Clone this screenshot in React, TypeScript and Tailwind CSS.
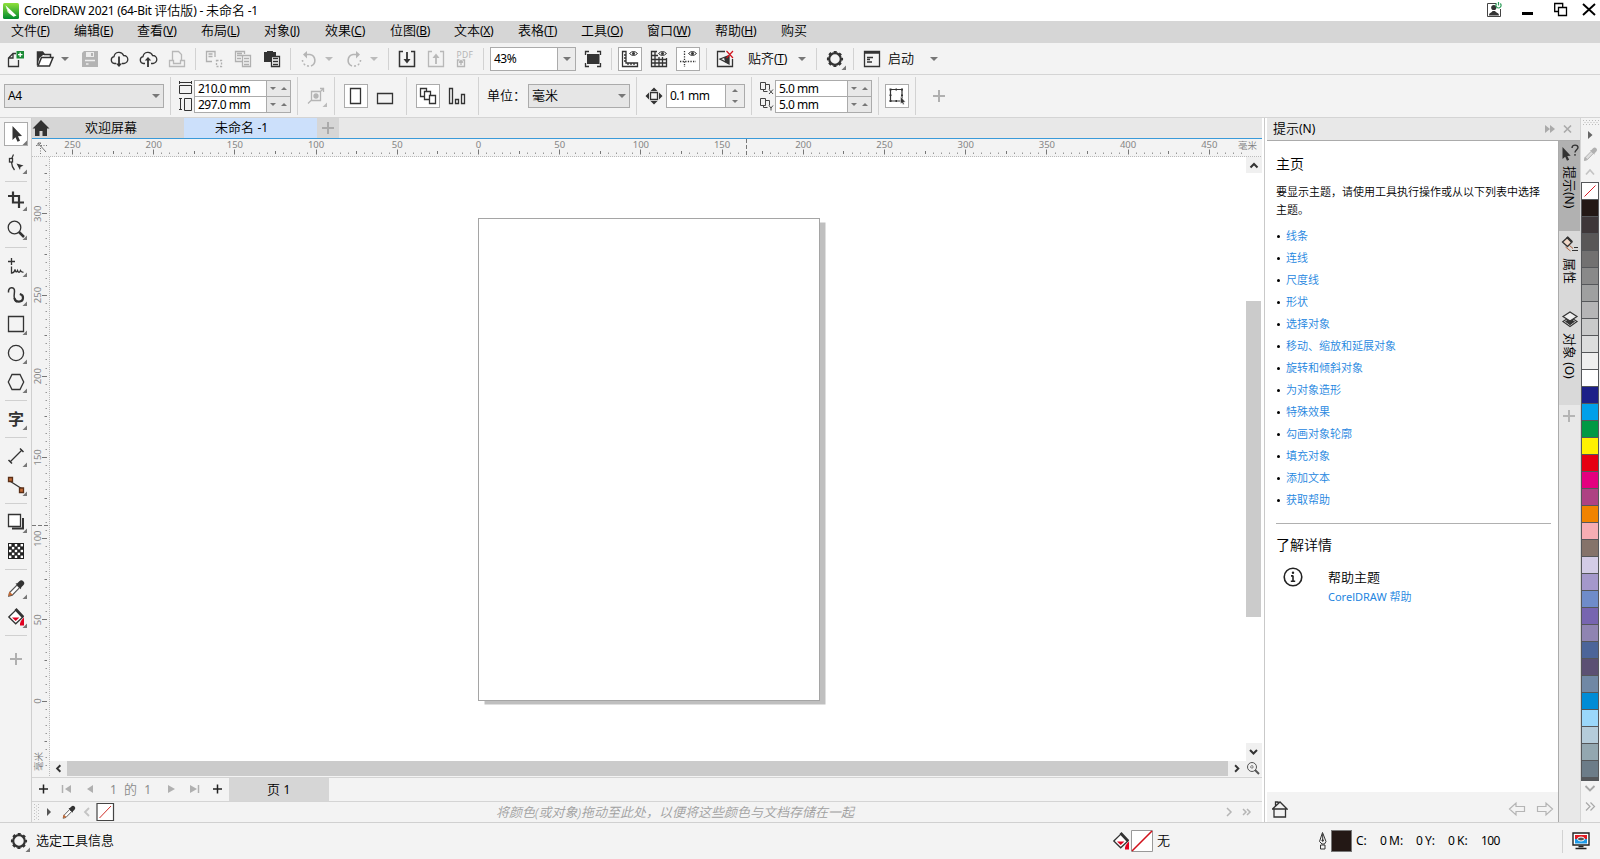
import React from "react";

type Kids = { children?: React.ReactNode };

const Ic = ({ children, corner, box, c = "" }: Kids & { corner?: boolean; box?: boolean; c?: string }) => (
  <svg
    className={"h-6 w-6 shrink-0 " + (box ? "bg-white outline outline-1 -outline-offset-1 outline-[#ababab] " : "") + c}
    viewBox="0 0 24 24"
    fill="none"
    stroke="#333"
    strokeWidth="1.3"
  >
    {children}
    {corner && <path d="M23 18.5V23H18.5Z" fill="#777" stroke="none" />}
  </svg>
);

const Caret = ({ c = "", up = false, small = false, color = "#777" }: { c?: string; up?: boolean; small?: boolean; color?: string }) => (
  <svg className={"shrink-0 " + (small ? "h-[3px] w-[6px] " : "h-1 w-2 ") + c} viewBox="0 0 8 4" preserveAspectRatio="none">
    <path d={up ? "M0 4H8L4 0Z" : "M0 0H8L4 4Z"} fill={color} />
  </svg>
);

const Sep = ({ c = "" }: { c?: string }) => <div className={"w-px shrink-0 bg-[#d2d2d2] " + c} />;
const HSep = () => <div className="my-[6px] h-px w-[22px] shrink-0 bg-[#d0d0d0]" />;

const Gear = ({ corner = false }) => (
  <Ic corner={corner}>
    <circle cx="12" cy="12" r="5.8" strokeWidth="2.2" />
    <circle cx="12" cy="12" r="7.1" strokeWidth="2" strokeDasharray="2.9 2.676" strokeDashoffset="1.45" />
  </Ic>
);

const Dropper = ({ grey = false }) => (
  <g stroke="none">
    <path d="M13 9l2.6 2.6-7.4 7.6-3.4 1 .8-3.6z" fill={grey ? "#ddd" : "#fff"} stroke={grey ? "#b0b0b0" : "#555"} strokeWidth="1.2" />
    <path d="M4.200 20.200l1.200-4.700 3.400 3.200z" fill={grey ? "#b0b0b0" : "#c46a35"} />
    <path d="M11.500 7.500l1.800-.300 2-2a2.800 2.800 0 0 1 4 4l-2 2-.400 2z" fill={grey ? "#b0b0b0" : "#333"} />
  </g>
);

const Bucket = () => (
  <g>
    <path d="M4.800 12l7.600-7.400 6.800 7.200-7.500 7z" fill="#fff" strokeWidth="1.3" />
    <path d="M11.500 4l7.500 8" strokeWidth="2.800" />
    <path d="M8 12.500h7.400l-3.700 3.600z" fill="#e00020" stroke="none" />
    <path d="M20 12.500v8h-4c-.500-2.500 1-5.500 4-8z" fill="#e00020" stroke="none" />
  </g>
);

const menus: [string, string, string][] = [
  ["文件", "F", "w-[63px]"], ["编辑", "E", "w-[63px]"], ["查看", "V", "w-[64px]"], ["布局", "L", "w-[63px]"],
  ["对象", "J", "w-[61px]"], ["效果", "C", "w-[65px]"], ["位图", "B", "w-[64px]"], ["文本", "X", "w-[64px]"],
  ["表格", "T", "w-[63px]"], ["工具", "O", "w-[66px]"], ["窗口", "W", "w-[68px]"], ["帮助", "H", "w-[66px]"], ["购买", "", "w-[60px]"],
];

const TitleBar = () => (
  <div className="flex h-[21px] items-center bg-white">
    <svg className="ml-[3px] h-4 w-4" viewBox="0 0 16 16">
      <defs>
        <linearGradient id="g" x1="0" y1="0" x2="0" y2="1"><stop offset="0" stopColor="#8fe03a" /><stop offset="1" stopColor="#008a2e" /></linearGradient>
      </defs>
      <rect width="16" height="16" rx="1.5" fill="url(#g)" />
      <path d="M2.500 2.200L13.500 12.500 10.500 13.800 5 9.500z" fill="#fff" />
      <path d="M2.500 2.200L5 9.500 6.500 10.600z" fill="#b8e8a0" />
    </svg>
    <div className="ml-[5px] w-[400px] whitespace-pre text-[12px] font-normal tracking-[-0.300px]">CorelDRAW 2021 (64-Bit <span className="text-[13px] font-[350] tracking-normal">评估版</span>) - <span className="text-[13px] font-[350] tracking-normal">未命名</span> -1</div>
    <svg className="ml-auto h-[21px] w-[130px]" viewBox="0 0 130 21" fill="none" stroke="#000">
      <path d="M26 3.500H17.500V16.500H30.500V9" stroke="#444" />
      <circle cx="23.800" cy="7.500" r="2.600" fill="#333" stroke="none" />
      <path d="M19 15.500c0-3 2.500-2.500 3.500-4.500h2.600c1 2 3.900 1.500 3.900 4.500z" fill="#333" stroke="none" />
      <path d="M26.700 3.500a2.600 2.600 0 1 0 3.600 0M28.500 2v3.500" stroke="#2f9e5b" strokeWidth="1.200" />
      <path d="M52 13.500h11" strokeWidth="3" />
      <path d="M88.500 11.500h-3.800v-8h8v3.500M88.500 7.500h8v8h-8z" strokeWidth="1.300" />
      <path d="M113 4l12 11M125 4l-12 11" strokeWidth="1.900" />
    </svg>
  </div>
);

const MenuBar = () => (
  <div className="flex h-[22px] items-start bg-[#d6d6d6] pl-[11px] text-[13px] leading-[19px]">
    {menus.map(([t, k, w]) => (
      <div key={t} className={"whitespace-nowrap " + w}>
        {t}
        {k && <span className="text-[12px] font-normal tracking-[-0.3px]">(<u className="underline-offset-1">{k}</u>)</span>}
      </div>
    ))}
  </div>
);

const StandardBar = () => (
  <div className="flex h-8 items-start border-b border-[#d4d4d4] bg-[#f3f3f3] pl-1 pt-1">
    <Ic><path d="M12 6.500H9L4.500 11V19.500H14.500V13M9 6.500V11H4.500" /><rect x="12.500" y="4" width="7.500" height="7.500" fill="#1a8a35" stroke="none" /><path d="M16.200 5.500v4.500M14 7.700h4.500" stroke="#fff" /></Ic>
    <Ic c="ml-[5px]"><path d="M4.500 18.500V5h5l2 2.500h6v3" strokeWidth="1.500" /><path d="M4 18.500V5h5.500l2 3H10L6.500 11z" fill="#333" stroke="none" /><path d="M5 19L8.500 10.500H20L16.500 19z" fill="#fff" strokeWidth="1.500" /></Ic>
    <div className="flex h-6 w-4 items-center justify-center"><Caret /></div>
    <Ic c="ml-[5px]"><path d="M4 6l2-2h14v16H4z" fill="#b3b3b3" stroke="none" /><path d="M8 5h8v5H8z" fill="#ececec" stroke="none" /><path d="M13 6h2v3h-2zM7 13h10v5H7z" fill="#b3b3b3" stroke="none" /><path d="M7 13.500h10M8 17h2.500" stroke="#eee" /></Ic>
    <Ic c="ml-[5px]"><path d="M9 16.500H7.500A3.500 3.500 0 0 1 7 9.600 5 5 0 0 1 16.600 8.500 4 4 0 0 1 17 16.500H15" /><path d="M12 9.500v8" strokeWidth="1.800" /><path d="M8.800 16.500h6.400L12 20z" fill="#333" stroke="none" /></Ic>
    <Ic c="ml-[5px]"><path d="M9 16.500H7.500A3.500 3.500 0 0 1 7 9.600 5 5 0 0 1 16.600 8.500 4 4 0 0 1 17 16.500H15" /><path d="M12 12v8" strokeWidth="1.800" /><path d="M8.800 13.500h6.400L12 10z" fill="#333" stroke="none" /></Ic>
    <Ic c="ml-[5px]"><g stroke="#b8b8b8"><path d="M7.500 13.500v-9h6l3 3v6M4.500 13.500h4v3h7v-3h4v6h-15z" /></g></Ic>
    <Sep c="mx-[6px] mt-[1px] h-[22px]" />
    <Ic><g stroke="#b0b0b0"><path d="M13 10V4.500H4.500v10H10M6.500 7h4M6.500 9.500h4" /><path d="M14.500 13.500h5v6h-5z" strokeDasharray="2 1.500" /></g></Ic>
    <Ic c="ml-[5px]"><g stroke="#b0b0b0"><path d="M11 14.500H4.500v-10h9V7M6 6.500h5M6 8.500h5M6 11.500h4M11.500 8.500h8v11h-8zM13 11.500h5M13 14.500h5M13 17.500h5" /></g></Ic>
    <Ic c="ml-[5px]"><path d="M4 5h3V4h6v1h3v4h-5v6H4z" fill="#333" stroke="none" /><path d="M11.500 9.500h8v10h-8z" fill="#fff" /><path d="M13 11.500h5M13 14.500h5M13 17.500h5" /></Ic>
    <Sep c="mx-[6px] mt-[1px] h-[22px]" />
    <Ic><g stroke="#b5b5b5" strokeWidth="1.600"><path d="M8 7.500h5a6 6 0 0 1 1 11.500" /><path d="M12 19a6 6 0 0 1-6.500-6" strokeDasharray="2 2" /><path d="M10 4L6 7.500l4 4z" fill="#b5b5b5" stroke="none" /></g></Ic>
    <div className="flex h-6 w-4 items-center justify-center"><Caret color="#bbb" /></div>
    <Ic c="ml-[5px]"><g stroke="#b5b5b5" strokeWidth="1.600"><path d="M16 7.500h-5a6 6 0 0 0-1 11.500" /><path d="M12 19a6 6 0 0 0 6.500-6" strokeDasharray="2 2" /><path d="M14 4l4 3.500-4 4z" fill="#b5b5b5" stroke="none" /></g></Ic>
    <div className="flex h-6 w-4 items-center justify-center"><Caret color="#bbb" /></div>
    <Sep c="mx-[6px] mt-[1px] h-[22px]" />
    <Ic><path d="M8 4.500H4.500v15h15v-15H16" strokeWidth="1.500" /><path d="M12 5v9" strokeWidth="1.800" /><path d="M8.500 12h7L12 16.500z" fill="#333" stroke="none" /></Ic>
    <Ic c="ml-[5px]"><g stroke="#b8b8b8"><path d="M8 4.500H4.500v15h15v-15H16" /><path d="M12 8v9" strokeWidth="1.800" /><path d="M8.500 11h7L12 6.500z" fill="#b8b8b8" stroke="none" /></g></Ic>
    <Ic c="ml-[5px]"><text x="3.500" y="11" fontSize="8.500" fontWeight="400" textLength="16.500" fill="#b5b5b5" stroke="none">PDF</text><path d="M6.500 13H4.500v6.500h7V13H9.500M8 18v-3.500M6 15.500l2-2 2 2" stroke="#b5b5b5" /></Ic>
    <Sep c="mx-[6px] mt-[1px] h-[22px]" />
    <div className="flex h-6 w-[86px] border border-[#ababab] bg-white text-[12px] font-normal">
      <div className="flex-1 pl-[3px] leading-[22px] tracking-[-0.5px]">43%</div>
      <div className="flex w-[18px] items-center justify-center border-l border-[#ababab] bg-[#ececec]"><Caret /></div>
    </div>
    <Ic c="ml-[5px]"><path d="M8 4.500H4.500V8M16 4.500h3.500V8M8 19.500H4.500V16M16 19.500h3.500V16" /><path d="M6 7h12.500v10H6z" fill="#333" stroke="none" /></Ic>
    <Sep c="mx-[6px] mt-[1px] h-[22px]" />
    <Ic box><path d="M4.500 4.500h3.500v11.500h11.500v3.500h-15zM6 8h1.500M6 11h1.500M6 14h1.500M10 18v-1.500M13 18v-1.500M16 18v-1.500" /><path d="M11.500 6.500q4-4 8 0q-4 4-8 0z" strokeWidth="1" /><circle cx="15.500" cy="6.500" r="1.500" fill="#333" stroke="none" /></Ic>
    <Ic c="ml-[5px]"><path d="M10 4.500H4.500v15h15V11M4.500 8.500H11M4.500 12.500h15M4.500 16h15M8 4.500v15M12 10v9.500M15.500 10v9.500" /><path d="M11.500 6.500q4-4 8 0q-4 4-8 0z" strokeWidth="1" /><circle cx="15.500" cy="6.500" r="1.500" fill="#333" stroke="none" /></Ic>
    <Ic box c="ml-[5px]"><path d="M8.500 4v16M4 14.500h16" strokeDasharray="1.300 1.300" /><path d="M12.500 6.500q4-4 8 0q-4 4-8 0z" strokeWidth="1" /><circle cx="16.500" cy="6.500" r="1.500" fill="#333" stroke="none" /></Ic>
    <Sep c="mx-[6px] mt-[1px] h-[22px]" />
    <Ic><path d="M12 4.500H4.500v15h15V12" /><path d="M16 8.500L7 12l9 5V8.500" strokeWidth="1.300" /><path d="M11 10.500l5-2V17l-4-2z" fill="#333" stroke="none" /><path d="M13.500 4l6.500 7M20 4l-6.500 7" stroke="#d0121c" strokeWidth="1.200" /></Ic>
    <div className="ml-[11px] w-[50px] whitespace-nowrap text-[13px] leading-[23px]">贴齐<span className="text-[12px] font-normal tracking-[-0.3px]">(<u>T</u>)</span></div>
    <div className="flex h-6 w-2 items-center"><Caret /></div>
    <Sep c="ml-[10px] mr-[6px] mt-[1px] h-[22px]" />
    <Gear corner />
    <Sep c="ml-[6px] mr-[6px] mt-[1px] h-[22px]" />
    <Ic><path d="M4.500 4.500h15v15h-15z" /><path d="M4 5.500h16" strokeWidth="2.500" /><path d="M7 10.500h6M7 12.500h3M7 15h5" /></Ic>
    <div className="ml-[4px] w-[42px] text-[13px] leading-[23px]">启动</div>
    <div className="flex h-6 items-center"><Caret /></div>
  </div>
);

const Spin = ({ a, b }: { a: string; b: string }) => (
  <div className="mt-[5px] flex h-[33px] w-[97px] shrink-0 flex-col border border-[#ababab] bg-white text-[12px] font-normal tracking-[-0.500px]">
    {[a, b].map((v, i) => (
      <div key={i} className={"flex " + (i ? "h-4 border-t border-[#ababab]" : "h-[15px]")}>
        <div className="flex-1 pl-[3px] leading-[15px]">{v}</div>
        <div className="flex w-6 items-center justify-around border-l border-[#ababab] bg-[#e8e8e8]">
          <Caret small /><Caret small up />
        </div>
      </div>
    ))}
  </div>
);

const PropertyBar = () => (
  <div className="flex h-[43px] items-start border-b border-[#d4d4d4] bg-[#f3f3f3] pl-1">
    <div className="mt-[9px] flex h-6 w-40 items-center justify-between border border-[#ababab] bg-[#e6e6e6] pl-[3px] pr-[3px] text-[12px] font-normal tracking-[-0.300px]">A4<Caret /></div>
    <Sep c="ml-[6px] mt-[2px] h-[38px]" />
    <svg className="ml-[8px] mt-[5px] h-[33px] w-[14px]" viewBox="0 0 14 33" fill="none" stroke="#333">
      <path d="M1 2.500h12M.500 1v3M12.500 1v3M.500 5.500h12v8H.500zM1.500 18v12M0 18.500h3M0 29.500h3M5.500 18.500h7v12h-7z" />
    </svg>
    <div className="ml-[1px]"><Spin a="210.0 mm" b="297.0 mm" /></div>
    <Sep c="ml-[6px] mt-[2px] h-[38px]" />
    <Ic c="ml-[6px] mt-[9px]"><g stroke="#b5b5b5"><path d="M7.500 7.500h9v9h-9zM4 19.500l3-3M16.500 7.500L20 4M16 4.500h3.500V8" /><circle cx="12" cy="12" r="2" fill="#b5b5b5" /><path d="M23 18.500V23H18.500Z" fill="#bbb" stroke="none" /></g></Ic>
    <Sep c="ml-[6px] mt-[2px] h-[38px]" />
    <Ic box c="ml-[9px] mt-[9px]"><path d="M6.500 4.500h10v15h-10z" /></Ic>
    <Ic c="ml-[5px] mt-[9px]"><path d="M4.500 9.500h15v10h-15z" /></Ic>
    <Sep c="ml-[9px] mt-[2px] h-[38px]" />
    <Ic box c="ml-[9px] mt-[9px]"><path d="M4.500 4.500h6v8h-6z" /><path d="M8.500 7.500h6v8h-6z" fill="#fff" /><path d="M13.500 11.500h6v8h-6z" fill="#fff" /></Ic>
    <Ic c="ml-[5px] mt-[9px]"><path d="M4.500 4.500h3v15h-3zM10.500 15.500h3v4h-3zM16.500 10.500h3v9h-3z" /></Ic>
    <Sep c="ml-[9px] mt-[2px] h-[38px]" />
    <div className="ml-2 w-[41px] whitespace-nowrap text-[13px] leading-[41px]">{"单位\uff1a"}</div>
    <div className="mt-[9px] flex h-6 w-[102px] items-center justify-between border border-[#ababab] bg-[#e6e6e6] pl-[3px] pr-[3px] text-[13px]">毫米<Caret /></div>
    <Sep c="ml-[6px] mt-[2px] h-[38px]" />
    <Ic c="ml-[5px] mt-[9px]"><path d="M8.500 8.500h7v7h-7z" /><path d="M8.500 7h7L12 3.500zM8.500 17h7L12 20.500zM7 8.500v7L3.500 12zM17 8.500v7l3.500-3.500z" fill="#333" stroke="none" /></Ic>
    <div className="mt-[9px] flex h-6 w-[79px] border border-[#ababab] bg-white text-[12px] font-normal tracking-[-0.500px]">
      <div className="flex-1 pl-[3px] leading-[22px]">0.1 mm</div>
      <div className="flex w-[19px] flex-col items-center justify-around border-l border-[#ababab] bg-[#ececec]"><Caret small up /><Caret small /></div>
    </div>
    <Sep c="ml-[6px] mt-[2px] h-[38px]" />
    <svg className="ml-[7px] mt-[5px] h-[33px] w-4" viewBox="0 0 16 33" fill="none" stroke="#444">
      <path d="M1.500 2.500h5v7h-5zM4.500 9.500v2h4M6.500 4.500h4v5M1.500 18.500h5v7h-5zM4.500 25.500v2h4M6.500 20.500h4v5" />
      <path d="M10 9.500l4 4.500M14 9.500L10 14M10 25.500l2 2.500 2-2.500M12 28v2.500" />
    </svg>
    <Spin a="5.0 mm" b="5.0 mm" />
    <Sep c="ml-[6px] mt-[2px] h-[38px]" />
    <Ic box c="ml-[6px] mt-[9px]"><path d="M5.500 5.500h11.500v11.500H5.500z" strokeWidth="1.200" /><path d="M4.500 4.500h2v2h-2zM10.500 4.500h1.500v2h-1.500zM16 4.500h2v2h-2zM4.500 10.500h2V12h-2zM4.500 16h2v2h-2zM10.500 16h1.500v2h-1.500zM16 10.500h2V12h-2z" fill="#333" stroke="none" /><path d="M15.500 12.500l5 5.500-2 .300.800 2-1.300.500-.900-2-1.600 1z" fill="#333" stroke="#fff" strokeWidth=".500" /></Ic>
    <Sep c="ml-[6px] mt-[2px] h-[38px]" />
    <Ic c="ml-[11px] mt-[9px]"><path d="M12 6v12M6 12h12" stroke="#b0b0b0" strokeWidth="2" /></Ic>
  </div>
);

const Toolbox = () => (
  <div className="flex w-8 shrink-0 flex-col items-center border-r border-[#cfcfcf] bg-[#f3f3f3] pt-1">
    <Ic box corner><path d="M8.500 4v14l3-2.800 2 4.500 2.500-1-2-4.500 4-.200z" fill="#333" stroke="none" /></Ic>
    <Ic corner c="mt-[5px]"><path d="M9.500 3.500C6.500 8 7 15 10.500 19" /><rect x="5.500" y="7.500" width="3" height="3.500" fill="#fff" /><path d="M12.500 12.500l7 2-3 1.500-.500 3z" fill="#333" stroke="none" /></Ic>
    <HSep />
    <Ic corner><path d="M4 8h11v12M9 3.500V14.500h11" strokeWidth="2.200" /></Ic>
    <Ic corner c="mt-[5px]"><circle cx="10.500" cy="10.500" r="6.300" /><path d="M15 15l5 5" strokeWidth="2.500" /></Ic>
    <HSep />
    <Ic corner><path d="M7.500 4v7M4 7.500h7" /><path d="M7.500 12.500v6.500c2 0 3-1 3.500-3.500.500 2.500 1.500 3.500 2.500 1 1 2.500 2 2.500 3 0 .800 1.500 1.500 2 3 1.500" /></Ic>
    <Ic corner c="mt-[5px]"><path d="M4.500 9.500C4 3.500 11 3 10.500 8.500 10 12 9 18 13 18.800" strokeWidth="1.500" /><path d="M10.500 15c.800 5 8.300 4.500 8.500 0 .200-2.500-1.200-3.500-3.200-4" strokeWidth="2.200" /></Ic>
    <Ic corner c="mt-[5px]"><path d="M4.500 4.500h15v15h-15z" /></Ic>
    <Ic corner c="mt-[5px]"><circle cx="12" cy="12" r="7.600" /></Ic>
    <Ic corner c="mt-[5px]"><path d="M8 4.500h8l3.700 7.500-3.700 7.500H8L4.300 12z" /></Ic>
    <HSep />
    <Ic corner><text x="4" y="17.800" fontSize="16" fontWeight="700" fill="#333" stroke="none">字</text></Ic>
    <HSep />
    <Ic corner><path d="M6 18L18 6" /><path d="M4.500 16l3.500 3.500M16 4.500l3.500 3.500" strokeWidth="1.500" /></Ic>
    <Ic corner c="mt-[5px]"><path d="M6.500 8.500l11 7" /><path d="M4.500 4.500h4v4h-4zM15.500 15h4v4.500h-4z" fill="#c46a35" stroke="#5a3018" /></Ic>
    <HSep />
    <Ic corner><path d="M4.500 4.500h12v12h-12z" fill="#fff" /><path d="M8 18.500h11V8" strokeWidth="2" /></Ic>
    <svg className="mt-[5px] h-6 w-6 shrink-0" viewBox="0 0 24 24">
      <rect x="4" y="4" width="16" height="16" fill="#222" />
      {Array.from({ length: 25 }, (_, i) =>
        ((i % 5) + Math.floor(i / 5)) % 2 === 0 ? <rect key={i} x={5 + (i % 5) * 2.9} y={5 + Math.floor(i / 5) * 2.9} width="2.400" height="2.400" fill="#fff" /> : null
      )}
    </svg>
    <HSep />
    <Ic corner><Dropper /></Ic>
    <Ic corner c="mt-[5px]"><Bucket /></Ic>
    <HSep />
    <Ic c="mt-[5px]"><path d="M12 6v12M6 12h12" stroke="#b0b0b0" strokeWidth="2" /></Ic>
  </div>
);

const Tabs = () => (
  <div className="flex h-5 bg-[#e8e8e8] text-[13px] leading-[18px]">
    <div className="flex w-[152px] bg-[#d6d6d6]">
      <svg className="mt-[2px] h-4 w-[18px]" viewBox="0 0 18 16"><path d="M9 0l8.500 8.500H15V16h-4.500v-5h-3v5H3V8.500H.500z" fill="#333" /></svg>
      <div className="ml-[35px] whitespace-nowrap">欢迎屏幕</div>
    </div>
    <div className="w-[133px] whitespace-pre bg-[#cce0fb] pl-[31px]">未命名 <span className="text-[12px] font-normal">-1</span></div>
    <svg className="h-5 w-[22px] bg-[#d6d6d6]" viewBox="0 0 22 20"><path d="M11 4v12M5 10h12" stroke="#aaa" strokeWidth="2" /></svg>
  </div>
);

const PX = 1.624;
const HRuler = () => {
  const zero = 446.5;
  const marks = Array.from({ length: 148 }, (_, i) => -265 + i * 5);
  return (
    <svg className="block h-[18px] w-[1230px]" viewBox="0 0 1230 18">
      <rect width="1230" height="18" fill="#f3f3f3" />
      <path d="M0 17.500h1230" stroke="#bbb" strokeDasharray="1 1" />
      {marks.map((m) => {
        const x = Math.round(zero + m * PX - 0.5) + 0.5;
        if (x > 1226 || x < 18) return null;
        const h = m % 50 === 0 ? 5 : m % 25 === 0 ? 3 : 1.5;
        return <path key={m} d={`M${x} ${m % 50 === 0 ? 15.5 : 15}v${-h}`} stroke={m % 25 ? "#999" : "#777"} />;
      })}
      {[-250, -200, -150, -100, -50, 0, 50, 100, 150, 200, 250, 300, 350, 400, 450].map((m) => (
        <text key={m} x={zero + m * PX} y="9" fontSize="9.500" fontWeight="400" textAnchor="middle" fill="#858585">{Math.abs(m)}</text>
      ))}
      <text x="1206" y="9.500" fontSize="9.500" fill="#808080">毫米</text>
      <path d="M714.500 0v18" stroke="#777" strokeDasharray="4 2" />
      <g stroke="#777" fill="none"><path d="M4 6.500h11M8.500 4v11" strokeDasharray="1 1.500" /><path d="M6 4l8 9M6 4v3M6 4h3" /></g>
    </svg>
  );
};

const VRuler = () => {
  const zero = 544;
  const marks = Array.from({ length: 80 }, (_, i) => -45 + i * 5);
  return (
    <svg className="block h-[619px] w-[18px] shrink-0" viewBox="0 0 18 619">
      <rect width="18" height="619" fill="#f3f3f3" />
      <path d="M17.500 0v619" stroke="#bbb" strokeDasharray="1 1" />
      {marks.map((m) => {
        const y = Math.round(zero - m * PX - 0.5) + 0.5;
        if (y < 6 || y > 612) return null;
        const w = m % 50 === 0 ? 5 : m % 25 === 0 ? 2.5 : 1.5;
        return <path key={m} d={`M15 ${y}h${-w}`} stroke={m % 25 ? "#999" : "#777"} />;
      })}
      {[0, 50, 100, 150, 200, 250, 300].map((m) => (
        <text key={m} transform={`translate(9 ${zero - m * PX}) rotate(-90)`} fontSize="9.500" fontWeight="400" textAnchor="middle" fill="#858585">{m}</text>
      ))}
      <text transform="translate(9.800 614) rotate(-90)" fontSize="9.500" fill="#808080">毫米</text>
      <path d="M0 368.500h18" stroke="#777" strokeDasharray="4 2" />
    </svg>
  );
};

const Chev = ({ d, c, s = "#333" }: { d: string; c: string; s?: string }) => (
  <svg className={"shrink-0 " + c} viewBox="0 0 16 16" fill="none" stroke={s} strokeWidth="2"><path d={d} /></svg>
);

const Workspace = () => (
  <div className="flex w-[1230px] shrink-0 flex-col bg-[#f3f3f3]">
    <Tabs />
    <div className="h-px bg-[#3a9ad9]" />
    <HRuler />
    <div className="flex h-[619px]">
      <VRuler />
      <div className="flex flex-1 flex-col">
        <div className="flex h-[604px]">
          <div className="flex-1 bg-white pl-[428px] pt-[61px]">
            <div className="h-[483px] w-[342px] border border-[#a5a5a5] bg-white shadow-[6px_4px_0_-0.500px_#bfbfbf]" />
          </div>
          <div className="flex w-4 flex-col bg-white">
            <Chev d="M4.500 10.500L8 7l3.500 3.500" c="h-4 w-4 bg-[#f0f0f0]" />
            <div className="mt-32 h-[316px] w-[15px] bg-[#cbcbcb]" />
            <Chev d="M4 6L7.500 9.500 11 6" c="mt-auto h-[18px] w-4 bg-[#f0f0f0]" />
          </div>
        </div>
        <div className="flex h-[15px] bg-[#f0f0f0]">
          <Chev d="M10 4.500L6.500 8l3.500 3.500" c="h-[15px] w-[17px]" />
          <div className="w-[1161px] bg-[#cbcbcb]" />
          <Chev d="M6.500 4.500L10 8l-3.500 3.500" c="h-[15px] w-[17px]" />
          <svg className="h-[15px] w-4" viewBox="0 0 16 15" fill="none" stroke="#555"><circle cx="7" cy="6" r="4.500" /><path d="M5 6h4M7 4v4" strokeDasharray="1 .700" /><path d="M10 9l4 4" strokeWidth="2" /></svg>
        </div>
      </div>
    </div>
    <div className="mt-[1px] flex h-[25px] border-y border-[#d4d4d4]">
      <svg className="h-6 w-[72px]" viewBox="0 0 72 24"><path d="M11.500 6.500v9M7 11h9" stroke="#222" strokeWidth="1.500" /><path d="M30.500 7v8" stroke="#b0b0b0" strokeWidth="1.500" /><path d="M39 7v8l-6-4zM61 7v8l-6-4z" fill="#b0b0b0" /></svg>
      <div className="w-[60px] whitespace-pre pl-[6px] text-[12px] font-normal leading-[22px] tracking-[0.300px] text-[#8a8a8a]">1  <span className="text-[13px] font-[350]">的</span>  1</div>
      <svg className="h-6 w-[65px]" viewBox="0 0 65 24"><path d="M4 7v8l7-4zM26 7v8l7-4z" fill="#b0b0b0" /><path d="M34.500 7v8" stroke="#b0b0b0" strokeWidth="1.500" /><path d="M53.500 6.500v9M49 11h9" stroke="#222" strokeWidth="1.500" /></svg>
      <div className="w-[100px] whitespace-pre bg-[#d6d6d6] pl-[38px] text-[13px] leading-[22px]">页 <span className="text-[12px] font-normal">1</span></div>
    </div>
    <div className="flex h-[20px] items-center">
      <svg className="h-5 w-[85px] shrink-0" viewBox="0 0 85 20" fill="none">
        <path d="M2.500 2v16M6.500 2v16M4.500 3.500v14" stroke="#c0c0c0" strokeDasharray="1 2" />
        <path d="M15 6v8l4-4z" fill="#555" />
        <g transform="translate(27.500 .500) scale(.78)"><Dropper /></g>
        <path d="M57 6l-4 4 4 4" stroke="#c4c4c4" strokeWidth="1.800" />
        <path d="M65 1.500h16.500v17H65z" fill="#fff" stroke="#444" strokeWidth="1.200" />
        <path d="M67.500 16L79 4" stroke="#d0302a" />
      </svg>
      <div className="ml-[379px] whitespace-nowrap text-[13px] italic leading-[18px] text-[#a0a0a0]">{"将颜色(或对象)拖动至此处\uff0c以便将这些颜色与文档存储在一起"}</div>
      <svg className="ml-auto mr-[9px] h-5 w-7 shrink-0" viewBox="0 0 28 20" fill="none" stroke="#b5b5b5" strokeWidth="1.500"><path d="M2 6l4 4-4 4M18 7l3 3-3 3M22 7l3 3-3 3" /></svg>
    </div>
  </div>
);

const topics = ["线条", "连线", "尺度线", "形状", "选择对象", "移动、缩放和延展对象", "旋转和倾斜对象", "为对象造形", "特殊效果", "勾画对象轮廓", "填充对象", "添加文本", "获取帮助"];

const Hints = () => (
  <div className="flex w-[291px] shrink-0 flex-col">
    <div className="flex h-[651px] flex-col bg-white pl-[9px] pr-[6px]">
      <div className="mt-[13px] text-[14px] leading-5">主页</div>
      <p className="mt-[9px] w-[270px] text-[11px] leading-[17.500px]">{"要显示主题\uff0c请使用工具执行操作或从以下列表中选择主题。"}</p>
      <ul className="mt-[7px] text-[11px] leading-[22px] text-[#2385e0]">
        {topics.map((t) => (
          <li key={t} className="flex h-[22px] items-center gap-2"><span className="ml-[1px] h-[3px] w-[3px] rounded-full bg-black" /><span className="-ml-[2px]">{t}</span></li>
        ))}
      </ul>
      <div className="mt-[12px] h-px w-[275px] shrink-0 bg-[#b0b0b0]" />
      <div className="mt-[11px] text-[14px] leading-5">了解详情</div>
      <div className="mt-[12px] flex">
        <svg className="ml-[7px] h-5 w-5" viewBox="0 0 20 20" fill="none" stroke="#222"><circle cx="10" cy="10" r="8.800" strokeWidth="1.600" /><path d="M10 8.500v6M8 8.900h2M7.800 14.300h4.400" strokeWidth="1.600" /><circle cx="10" cy="5.700" r="1.200" fill="#222" stroke="none" /></svg>
        <div className="ml-[25px]">
          <div className="text-[13px] leading-5">帮助主题</div>
          <div className="text-[11px] leading-5 text-[#2385e0]"><span className="font-normal">CorelDRAW </span>帮助</div>
        </div>
      </div>
    </div>
    <div className="flex h-[30px] items-center justify-between bg-[#f3f3f3] pl-[5px] pr-[4px] pt-[3px]">
      <svg className="h-5 w-4" viewBox="0 0 16 20" fill="none" stroke="#333" strokeWidth="1.300"><path d="M2 9.500v8.500h11.500V9.500M.500 10L8 3l7 7zM3.500 7V3H6v2" /></svg>
      <svg className="h-5 w-[46px]" viewBox="0 0 46 20" fill="none" stroke="#b5b5b5" strokeWidth="1.200"><path d="M1.500 10L8 4v3.500h8.500v5H8V16zM44.500 10L38 4v3.500h-8.500v5H38V16z" /></svg>
    </div>
  </div>
);

const DockTabs = () => (
  <div className="flex w-[22px] shrink-0 flex-col border-l border-[#ababab] bg-[#e8e8e8] text-[13px]">
    <div className="flex h-[90px] flex-col items-center bg-[#b1b1b1] pt-[3px]">
      <svg className="h-[18px] w-[18px] shrink-0" viewBox="0 0 18 18"><path d="M1.500 3v12l2.700-2.300 1.800 4 2.200-1-1.900-3.700 3.400-.300z" fill="#333" /><path d="M11 4c0-4 6-3.500 6-.500 0 2-3 2.500-3 5M14 10v1.800" fill="none" stroke="#333" strokeWidth="1.400" /></svg>
      <div className="mt-[4px] whitespace-nowrap leading-5 [text-orientation:sideways] [writing-mode:vertical-rl]">提示<span className="text-[12px] font-normal">(N)</span></div>
    </div>
    <div className="flex h-[74px] flex-col items-center bg-[#d9d9d9] pt-[5px]">
      <svg className="h-[17px] w-[18px] shrink-0" viewBox="0 0 18 17" fill="none" stroke="#333"><path d="M1.500 6l5-4.500L11 6l-4.500 4.500z" fill="#f0d8c8" strokeWidth="1.300" /><path d="M6 1l5 5" strokeWidth="2.400" /><path d="M4.500 11l5 4M8 9l4 3.500" stroke="#b5633a" /><path d="M11 14.500h6M13 11.500h4" strokeWidth="1.200" /></svg>
      <div className="mt-[5px] whitespace-nowrap leading-5 [text-orientation:sideways] [writing-mode:vertical-rl]">属性</div>
    </div>
    <div className="flex h-[100px] flex-col items-center bg-[#d9d9d9] pt-[5px]">
      <svg className="h-[18px] w-[18px] shrink-0" viewBox="0 0 18 18" fill="none" stroke="#333" strokeWidth="1.200"><path d="M2 11.500l7-4.500 7 4.500-7 5z" fill="#fff" /><path d="M5 11.500l4-2.500 4 2.500-4 3z" fill="#333" /><path d="M2 6.500L9 2l7 4.500-7 4.500z" fill="#eee" /></svg>
      <div className="mt-[5px] whitespace-pre leading-5 [text-orientation:sideways] [writing-mode:vertical-rl]">对象<span className="text-[12px] font-normal"> (O)</span></div>
    </div>
    <svg className="h-[22px] w-[20px]" viewBox="0 0 20 22"><path d="M10 5v12M4 11h12" stroke="#b5b5b5" strokeWidth="2" /></svg>
  </div>
);

const Docker = () => (
  <div className="flex w-[313px] shrink-0 flex-col">
    <div className="flex h-[23px] shrink-0 items-center border-b border-[#ababab] bg-[#e8e8e8] pl-[6px] text-[13px] leading-5">
      <div className="-mt-[2px]">提示<span className="text-[12px] font-normal">(N)</span></div>
      <svg className="ml-auto mr-[6px] h-4 w-8" viewBox="0 0 32 16"><path d="M3 4v8l5-4zM8 4v8l5-4z" fill="#aaa" /><path d="M22 4.500l7 7M29 4.500l-7 7" stroke="#aaa" strokeWidth="1.700" /></svg>
    </div>
    <div className="flex flex-1">
      <Hints />
      <DockTabs />
    </div>
  </div>
);

const swatches = [
  "#231815", "#3e3739", "#595757", "#727171", "#898989", "#9fa0a0", "#b5b5b6", "#c9caca", "#dcdddd", "#efefef", "#ffffff",
  "#1d2088", "#00a0e9", "#009944", "#fff100", "#e60012", "#e4007f", "#ae4283", "#f08300", "#f6adb3", "#85736a", "#d3cce6",
  "#a498cb", "#6f8cc9", "#7765b0", "#8f84b2", "#4c6599", "#5b5073", "#7088a5", "#008cd6", "#9ad7fa", "#b5ccda", "#93a7b0", "#6c7c88",
];

const Palette = () => (
  <div className="flex w-5 shrink-0 flex-col items-start border-l border-[#d4d4d4] bg-[#f3f3f3]">
    <svg className="h-[64px] w-[19px] shrink-0" viewBox="0 0 19 64" fill="none">
      <path d="M2 2.500h16M2 6.500h16M3.500 4.500h14" stroke="#bbb" strokeDasharray="1 2" />
      <path d="M7 13v8l4.500-4z" fill="#666" />
      <g transform="translate(-.500 26) scale(.82)"><Dropper grey /></g>
      <path d="M5 56.500l4-4.500 4 4.500" stroke="#c4c4c4" strokeWidth="1.700" />
    </svg>
    <div className="flex w-[18px] flex-col border border-b-[3px] border-[#55575a]">
      <svg className="h-[17px] w-4 border-b border-[#55575a] bg-white" viewBox="0 0 16 16"><path d="M2.500 13.500L13.500 2.500" stroke="#d81e28" /></svg>
      {swatches.map((s, i) => <div key={i} className="h-[17px] border-b border-[#55575a]" style={{ backgroundColor: s }} />)}
    </div>
    <svg className="h-9 w-[19px] shrink-0" viewBox="0 0 19 36" fill="none" stroke="#a8a8a8" strokeWidth="1.800"><path d="M4.500 5L9 9.500 13.500 5" /><path d="M5 21.500l4 4-4 4M9.500 21.500l4 4-4 4" strokeWidth="1.200" /></svg>
  </div>
);

const StatusBar = () => (
  <div className="flex h-[37px] items-center border-t border-[#d0d0d0] bg-[#f3f3f3] text-[13px]">
    <div className="ml-[7px]"><Gear corner /></div>
    <div className="ml-[5px] w-[1074px]">选定工具信息</div>
    <Ic><g transform="translate(-1 0)"><Bucket /></g></Ic>
    <svg className="-ml-[3px] h-[22px] w-[22px]" viewBox="0 0 22 22"><path d="M.500.500h21v21H.500z" fill="#fff" stroke="#999" /><path d="M1 21L21 1" stroke="#d0121c" strokeWidth="1.600" /></svg>
    <div className="ml-[4px] w-[160px]">无</div>
    <svg className="h-5 w-[14px]" viewBox="0 0 14 20" fill="none" stroke="#333"><path d="M5 13L2.500 10.500 5.500 1.500h0L9 10.500 7.500 13zM3.500 14h4.500v4H3.500zM5.700 3v6" /><circle cx="5.700" cy="9.500" r=".800" fill="#333" /></svg>
    <div className="h-[22px] w-[21px] border border-[#777] bg-[#231815]" />
    <div className="ml-[4px] grid w-[206px] grid-cols-[24px_9px_27px_9px_23px_9px_24px_30px] whitespace-pre text-[12px] font-normal">
      <span>C:</span><span>0</span><span>M:</span><span>0</span><span>Y:</span><span>0</span><span>K:</span><span className="tracking-[-0.600px]">100</span>
    </div>
    <Sep c="h-[23px]" />
    <svg className="ml-[9px] h-5 w-[18px]" viewBox="0 0 18 20"><path d="M1 2h16v12H1z" fill="#fff" stroke="#222" strokeWidth="1.400" /><path d="M3 4h12v4H3z" fill="#e01b22" /><path d="M3 8h12v4.500H3z" fill="#1e9be8" /><ellipse cx="9" cy="8" rx="3.500" ry="2" fill="#555" stroke="#fff" /><path d="M6.500 15.500h5M3.500 17.500h11" stroke="#222" strokeWidth="1.300" /></svg>
  </div>
);

export default function App() {
  return (
    <div className="flex h-[859px] w-[1600px] flex-col overflow-hidden bg-[#f3f3f3] font-['Noto_Sans','Noto_Sans_CJK_SC',sans-serif] font-[350] text-black">
      <TitleBar />
      <MenuBar />
      <StandardBar />
      <PropertyBar />
      <div className="flex h-[704px] shrink-0">
        <Toolbox />
        <Workspace />
        <div className="flex w-[5px] shrink-0 bg-white pl-[2px]"><div className="w-px bg-[#c9c9c9]" /></div>
        <Docker />
        <Palette />
      </div>
      <StatusBar />
    </div>
  );
}
